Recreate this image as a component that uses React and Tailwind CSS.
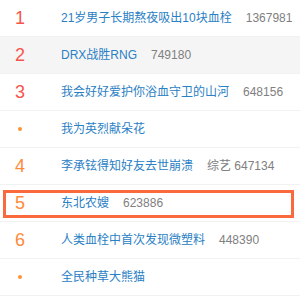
import React from 'react';

const rows = [
  { rank: '1', title: '21岁男子长期熬夜吸出10块血栓', count: '1367981', tone: 'red' },
  { rank: '2', title: 'DRX战胜RNG', count: '749180', tone: 'red', shaded: true },
  { rank: '3', title: '我会好好爱护你浴血守卫的山河', count: '648156', tone: 'red' },
  { rank: null, title: '我为英烈献朵花' },
  { rank: '4', title: '李承铉得知好友去世崩溃', count: '综艺 647134', tone: 'orange' },
  { rank: '5', title: '东北农嫂', count: '623886', tone: 'orange', boxed: true },
  { rank: '6', title: '人类血栓中首次发现微塑料', count: '448390', tone: 'orange' },
  { rank: null, title: '全民种草大熊猫' },
];

function Row({ rank, title, count, tone, shaded, boxed }) {
  return (
    <div
      className={`relative flex items-center h-[37px] border-b border-[#f2f2f2] ${shaded ? 'bg-[#f5f5f5]' : 'bg-white'}`}
    >
      {/* highlight frame over the row */}
      {boxed && (
        <span className="absolute left-[3px] right-[6px] top-[5px] bottom-[3px] border-[3px] border-[#fa6a3c] pointer-events-none" />
      )}
      <div className="w-10 flex justify-center items-center">
        {rank ? (
          <span className={`text-[18px] leading-none ${tone === 'red' ? 'text-[#f5554b]' : 'text-[#ff8a3a]'}`}>
            {rank}
          </span>
        ) : (
          <span className="w-[4px] h-[4px] rounded-full bg-[#ff9435]" />
        )}
      </div>
      <span className="ml-[21px] text-[12px] text-[#2a80c4] whitespace-nowrap">{title}</span>
      {count && <span className="ml-[14px] text-[12px] text-[#808080] whitespace-nowrap">{count}</span>}
    </div>
  );
}

export default function App() {
  return (
    <div className="w-[300px] h-[300px] bg-white overflow-hidden font-['Liberation_Sans','Noto_Sans_CJK_SC',sans-serif]">
      {rows.map((r, i) => (
        <Row key={i} {...r} />
      ))}
    </div>
  );
}
